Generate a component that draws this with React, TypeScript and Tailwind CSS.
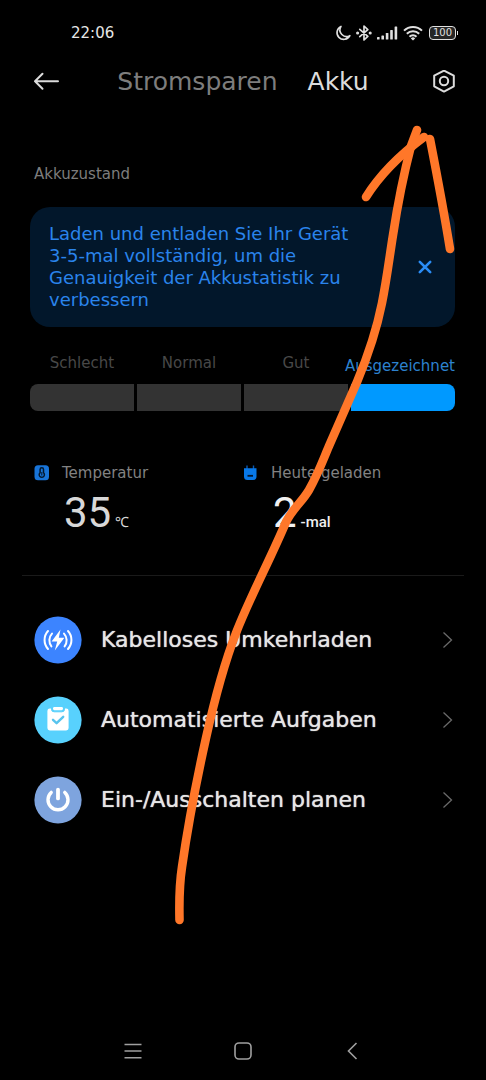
import type { ReactNode } from 'react';

type Level = { label: string; active?: boolean };

const levels: Level[] = [
    { label: 'Schlecht' },
    { label: 'Normal' },
    { label: 'Gut' },
    { label: 'Ausgezeichnet', active: true }
];

function StatusBar() {
    return (
        <div className="flex h-[66px] items-center justify-between pl-[71px] pr-7">
            <span className="text-[15px] leading-5 text-[#e6e6e6]">22:06</span>
            <div className="flex items-center gap-[5px] text-[#e0e0e0]">
                <svg width="16" height="16" viewBox="0 0 16 16" fill="none" stroke="currentColor" strokeWidth="1.6" strokeLinejoin="round">
                    <path d="M6 1.4A6.8 6.8 0 1 0 14.9 10.6A6.6 6.6 0 0 1 6 1.4Z" />
                </svg>
                <svg width="16" height="16" viewBox="0 0 16 16" fill="none" stroke="currentColor" strokeWidth="1.7" strokeLinejoin="round" strokeLinecap="round">
                    <path d="M3.8 4.4L11.8 11.4L8 15V1L11.8 4.6L3.8 11.6" />
                    <circle cx="1.6" cy="8" r="0.7" fill="currentColor" />
                    <circle cx="14.2" cy="8" r="0.7" fill="currentColor" />
                </svg>
                <svg width="21" height="14" viewBox="0 0 21 14" fill="currentColor">
                    <rect x="0" y="11" width="2.6" height="2.6" rx="0.6" />
                    <rect x="4.4" y="9.5" width="2.6" height="4" rx="0.6" />
                    <rect x="8.8" y="7" width="2.6" height="6.5" rx="0.6" />
                    <rect x="13.2" y="4" width="2.6" height="9.5" rx="0.6" />
                    <rect x="17.6" y="0.5" width="2.6" height="13" rx="0.6" />
                </svg>
                <svg width="20" height="16" viewBox="0 0 20 16" fill="none" stroke="currentColor" strokeWidth="2">
                    <path d="M1 5.6A13 13 0 0 1 19 5.6" />
                    <path d="M3.8 8.8A9 9 0 0 1 16.2 8.8" />
                    <path d="M6.5 11.8A5 5 0 0 1 13.5 11.8" />
                    <path d="M10 15.6L7.8 13.4A3.2 3.2 0 0 1 12.2 13.4Z" fill="currentColor" stroke="none" />
                </svg>
                <div className="flex items-center gap-px pl-px">
                    <span className="flex h-[14px] w-[27px] items-center justify-center rounded border border-[#e0e0e0] bg-[#262626] text-[10px] leading-3">
                        100
                    </span>
                    <span className="h-1 w-px bg-[#e0e0e0]" />
                </div>
            </div>
        </div>
    );
}

function Header() {
    return (
        <header className="flex h-8 items-center justify-between px-[30px]">
            <button type="button" aria-label="Zurück" className="text-[#dcdcdc]">
                <svg width="32" height="24" viewBox="0 0 32 24" fill="none" stroke="currentColor" strokeWidth="2" strokeLinecap="round" strokeLinejoin="round">
                    <path d="M28 11.2H5M12.5 3.7L5 11.2L12.5 18.7" />
                </svg>
            </button>
            <nav className="flex gap-[30px] text-[25px] leading-8">
                <button type="button" className="text-[#7d7d7d]">Stromsparen</button>
                <button type="button" className="text-[#dcdcdc]">Akku</button>
            </nav>
            <button type="button" aria-label="Einstellungen" className="flex w-8 justify-end text-[#dcdcdc]">
                <svg width="24" height="24" viewBox="0 1 24 24" fill="none" stroke="currentColor" strokeWidth="2" strokeLinejoin="round">
                    <path d="M12 1.6L21.8 6.7V17.3L12 22.6L2.2 17.3V6.7Z" />
                    <circle cx="12" cy="12" r="4.2" />
                </svg>
            </button>
        </header>
    );
}

function BatteryHealth() {
    return (
        <section className="pl-[30px] pr-[31px]">
            <h2 className="mt-[66px] pl-1 text-[15px] leading-5 text-[#7d7d7d]">Akkuzustand</h2>

            <div className="mt-[23px] flex items-center justify-between rounded-[20px] bg-[#02172b] py-4 pl-[19px] pr-5">
                <p className="max-w-[320px] text-[18px] leading-[22px] text-[#2a84ec]">
                    Laden und entladen Sie Ihr Gerät 3-5-mal vollständig, um die Genauigkeit der Akkustatistik zu verbessern
                </p>
                <button type="button" aria-label="Schließen" className="text-[#2a8cf4]">
                    <svg width="20" height="20" viewBox="0 0 20 20" fill="none" stroke="currentColor" strokeWidth="2.6" strokeLinecap="round">
                        <path d="M4.8 4.8L15.2 15.2M15.2 4.8L4.8 15.2" />
                    </svg>
                </button>
            </div>

            <div className="mt-[26px] grid grid-cols-4 gap-[3px] text-[15px] leading-5">
                {levels.map((level) => (
                    <div key={level.label} className={level.active ? 'flex h-[31px] justify-end pt-[3px]' : 'flex h-[31px] justify-center'}>
                        <span className={level.active ? 'text-[#2d82cf]' : 'text-[#484848]'}>{level.label}</span>
                    </div>
                ))}
            </div>
            <div className="grid grid-cols-4 gap-[3px] overflow-hidden rounded-lg">
                {levels.map((level) => (
                    <div key={level.label} className={level.active ? 'h-[27px] bg-[#0099ff]' : 'h-[27px] bg-[#333333]'} />
                ))}
            </div>
        </section>
    );
}

function Stat({ icon, label, children }: { icon: ReactNode; label: string; children: ReactNode }) {
    return (
        <div>
            <div className="flex items-center gap-3">
                {icon}
                <span className="text-[15px] leading-5 text-[#828282]">{label}</span>
            </div>
            <div className="mt-1 flex items-baseline gap-1 pl-[30px] font-[Roboto,sans-serif] text-[42px] leading-[52px]">{children}</div>
        </div>
    );
}

function Stats() {
    return (
        <section className="mx-[22px] mt-[52px] grid grid-cols-[209px_1fr] border-b border-[#1a1a1a] pb-[27px] pl-3">
            <Stat
                label="Temperatur"
                icon={
                    <svg width="16" height="16" viewBox="0 0 16 16">
                        <rect x="0.5" y="0.2" width="14.5" height="15" rx="3.5" fill="#1874d8" />
                        <path d="M6.1 7.8V4.4a1.7 1.7 0 0 1 3.4 0V7.8A2.6 2.6 0 1 1 6.1 7.8Z" fill="none" stroke="#03182e" strokeWidth="1.5" />
                        <path d="M7.8 7V10.5" stroke="#03182e" strokeWidth="1" />
                    </svg>
                }
            >
                <span className="text-[#d8d8d8]">35</span>
                <span className="text-[14px] text-[#d8d8d8]">℃</span>
            </Stat>
            <Stat
                label="Heute geladen"
                icon={
                    <svg width="16" height="16" viewBox="0 0 16 16">
                        <path d="M4 0.5V4M10.5 0.5V4" stroke="#0a58b0" strokeWidth="1.4" />
                        <path d="M1 3.2H13.5V11.5A3.5 3.5 0 0 1 10 15H4.5A3.5 3.5 0 0 1 1 11.5Z" fill="#0878e8" />
                        <path d="M4.5 10.8H10" stroke="#03182e" strokeWidth="1.8" />
                    </svg>
                }
            >
                <span className="text-[#f0f0f0]">2</span>
                <span className="text-[15px] font-medium text-[#f0f0f0]">-mal</span>
            </Stat>
        </section>
    );
}

function MenuItem({ icon, label }: { icon: ReactNode; label: string }) {
    return (
        <li>
            <a href="#" className="flex h-20 items-center pl-[34px] pr-7">
                {icon}
                <span className="ml-[19px] flex-1 text-[22px] leading-7 text-[#e6e6e6] [text-shadow:0_0_1px_#e6e6e6]">{label}</span>
                <svg width="20" height="20" viewBox="0 0 20 20" fill="none" stroke="#6a6a6a" strokeWidth="1.3">
                    <path d="M5.5 2.5L13.5 10L5.5 17.5" />
                </svg>
            </a>
        </li>
    );
}

function Menu() {
    return (
        <ul className="mt-6">
            <MenuItem
                label="Kabelloses Umkehrladen"
                icon={
                    <svg width="48" height="48" viewBox="0 0 48 48" fill="none" stroke="#fff" strokeWidth="2" strokeLinecap="round">
                        <circle cx="24" cy="24" r="23.6" fill="#3c84ff" stroke="none" />
                        <path d="M26.5 13.5L17.6 25.6H23.2L20.8 34.5L30.4 21.8H24.8Z" fill="#fff" stroke="none" />
                        <path d="M14 15A13.5 13.5 0 0 0 14 33M18 17.6A10 10 0 0 0 17.4 30.4" />
                        <path d="M34 15A13.5 13.5 0 0 1 34 33M30 17.6A10 10 0 0 1 30.6 30.4" />
                    </svg>
                }
            />
            <MenuItem
                label="Automatisierte Aufgaben"
                icon={
                    <svg width="48" height="48" viewBox="0 0 48 48" fill="none" strokeLinecap="round" strokeLinejoin="round">
                        <circle cx="24" cy="24" r="23.6" fill="#58d1fd" />
                        <rect x="13.4" y="12.5" width="21.2" height="22" rx="2.4" fill="#fff" />
                        <path d="M17.5 11V13.2A2.6 2.6 0 0 0 20.1 15.8H27.9A2.6 2.6 0 0 0 30.5 13.2V11" fill="#58d1fd" stroke="#58d1fd" />
                        <rect x="19" y="11" width="10" height="3.2" rx="1.4" fill="#fff" />
                        <path d="M19 23.8L22.6 27.2L29.2 20.8" stroke="#58c4ee" strokeWidth="2.4" />
                    </svg>
                }
            />
            <MenuItem
                label="Ein-/Ausschalten planen"
                icon={
                    <svg width="48" height="48" viewBox="0 0 48 48" fill="none" stroke="#fff" strokeLinecap="round">
                        <circle cx="24" cy="24" r="23.6" fill="#7ea4de" stroke="none" />
                        <path d="M17.2 16.4A10 10 0 1 0 30.8 16.4" strokeWidth="3.4" />
                        <path d="M24 13.6V22.4" strokeWidth="3.8" />
                    </svg>
                }
            />
        </ul>
    );
}

function NavigationBar() {
    return (
        <nav className="mt-auto flex h-[58px] items-center justify-center gap-[86px] text-[#a0a0a0]">
            <button type="button" aria-label="Letzte Apps">
                <svg width="24" height="24" viewBox="0 0 24 24" stroke="currentColor" strokeWidth="1.6">
                    <path d="M3.5 5.5H20.5M3.5 12H20.5M3.5 18.8H20.5" />
                </svg>
            </button>
            <button type="button" aria-label="Startseite">
                <svg width="24" height="24" viewBox="0 0 24 24" fill="none" stroke="currentColor" strokeWidth="1.6">
                    <rect x="4" y="4" width="16" height="16" rx="4" />
                </svg>
            </button>
            <button type="button" aria-label="Zurück">
                <svg width="24" height="24" viewBox="0 0 24 24" fill="none" stroke="currentColor" strokeWidth="1.6">
                    <path d="M15.5 4L7.5 12L15.5 20" />
                </svg>
            </button>
        </nav>
    );
}

// Hand-drawn arrow pointing at the settings button
function DrawnArrow() {
    return (
        <svg
            aria-hidden="true"
            className="pointer-events-none absolute left-0 top-0"
            width="486"
            height="940"
            viewBox="0 0 486 940"
            fill="none"
            stroke="#ff7729"
            strokeWidth="8.6"
            strokeLinecap="round"
            strokeLinejoin="round"
        >
            <path d="M179.500 920C179 898 180 880 182 867C188 825 196 783 206 738C214 702 224 664 236 633C250 597 270 560 286 522C293 508 302 502 309 490C318 474 323 460 329 446L357 382C367 358 377 328 382 303C387 278 389 260 393 235C398 202 404 173 411 146L417 130" />
            <path d="M366 197C381 173 401 154 424 137" />
            <path d="M430 139C437 175 444 212 450 249" />
        </svg>
    );
}

export default function App() {
    return (
        <div className="relative flex min-h-screen flex-col overflow-hidden bg-black font-['DejaVu_Sans',Verdana,sans-serif]">
            <StatusBar />
            <Header />
            <main>
                <BatteryHealth />
                <Stats />
                <Menu />
            </main>
            <NavigationBar />
            <DrawnArrow />
        </div>
    );
}
